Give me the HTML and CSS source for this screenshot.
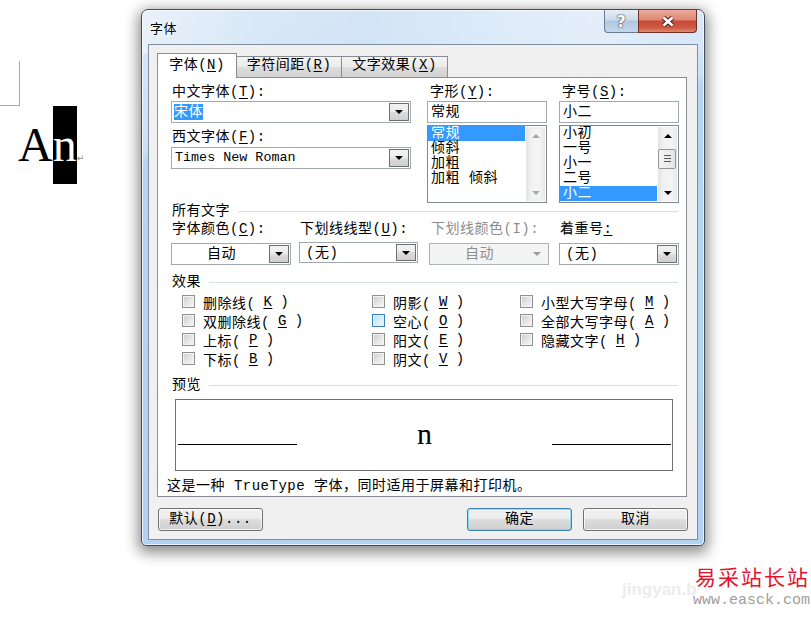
FILE: index.html
```html
<!DOCTYPE html>
<html lang="zh-CN">
<head>
    <meta charset="UTF-8">
    <meta name="viewport" content="width=device-width, initial-scale=1.0">
    <title>字体</title>
    <link rel="stylesheet" href="styles.css">
</head>
<body>
    <div class="screen">
        <div class="doc">
            <div class="margin-mark"></div>
            <div class="word">A<span class="sel">n</span><span class="para">↵</span></div>
        </div>

        <div class="dialog">
            <div class="titlebar">
                <span class="title">字体</span>
                <div class="caption">
                    <span class="cap help">?</span>
                    <span class="cap close">
                        <svg width="16" height="13" viewBox="0 0 16 13">
                            <path d="M3.5 2.5 L12.5 10.5 M12.5 2.5 L3.5 10.5" stroke="#5a2019" stroke-width="4.6" fill="none"/>
                            <path d="M3.5 2.5 L12.5 10.5 M12.5 2.5 L3.5 10.5" stroke="#fff" stroke-width="2.6" fill="none"/>
                        </svg>
                    </span>
                </div>
            </div>

            <div class="client">
                <div class="tabs">
                    <span class="tab active">字体(<u>N</u>)</span>
                    <span class="tab">字符间距(<u>R</u>)</span>
                    <span class="tab">文字效果(<u>X</u>)</span>
                </div>

                <div class="panel">
                    <div class="font-grid">
                        <div class="field-col">
                            <span class="lbl">中文字体(<u>T</u>):</span>
                            <div class="combo"><span class="val"><span class="hl">宋体</span></span><span class="drop"></span></div>
                            <span class="lbl second">西文字体(<u>F</u>):</span>
                            <div class="combo combo-2"><span class="val mono">Times New Roman</span><span class="drop"></span></div>
                        </div>
                        <div class="field-col narrow">
                            <span class="lbl">字形(<u>Y</u>):</span>
                            <div class="edit">常规</div>
                            <div class="list">
                                <ul>
                                    <li class="on">常规</li>
                                    <li>倾斜</li>
                                    <li>加粗</li>
                                    <li>加粗 倾斜</li>
                                </ul>
                                <div class="vscroll disabled">
                                    <span class="arr up"></span>
                                    <span class="arr down"></span>
                                </div>
                            </div>
                        </div>
                        <div class="field-col narrow">
                            <span class="lbl">字号(<u>S</u>):</span>
                            <div class="edit">小二</div>
                            <div class="list">
                                <ul>
                                    <li>小初</li>
                                    <li>一号</li>
                                    <li>小一</li>
                                    <li>二号</li>
                                    <li class="on">小二</li>
                                </ul>
                                <div class="vscroll">
                                    <span class="arr up"></span>
                                    <span class="thumb"></span>
                                    <span class="arr down"></span>
                                </div>
                            </div>
                        </div>
                    </div>

                    <div class="group first">所有文字</div>
                    <div class="row4">
                        <div>
                            <span class="lbl">字体颜色(<u>C</u>):</span>
                            <div class="combo"><span class="val center">自动</span><span class="drop"></span></div>
                        </div>
                        <div>
                            <span class="lbl">下划线线型(<u>U</u>):</span>
                            <div class="combo short"><span class="val pad">(无)</span><span class="drop"></span></div>
                        </div>
                        <div>
                            <span class="lbl off">下划线颜色(I):</span>
                            <div class="combo disabled"><span class="val center">自动</span><span class="drop"></span></div>
                        </div>
                        <div>
                            <span class="lbl">着重号<u>:</u></span>
                            <div class="combo"><span class="val pad">(无)</span><span class="drop"></span></div>
                        </div>
                    </div>

                    <div class="group">效果</div>
                    <div class="effects">
                        <div class="fx-col">
                            <span class="check"><span class="box"></span>删除线(<u>K</u>)</span>
                            <span class="check"><span class="box"></span>双删除线(<u>G</u>)</span>
                            <span class="check"><span class="box"></span>上标(<u>P</u>)</span>
                            <span class="check"><span class="box"></span>下标(<u>B</u>)</span>
                        </div>
                        <div class="fx-col">
                            <span class="check"><span class="box"></span>阴影(<u>W</u>)</span>
                            <span class="check"><span class="box hot"></span>空心(<u>O</u>)</span>
                            <span class="check"><span class="box"></span>阳文(<u>E</u>)</span>
                            <span class="check"><span class="box"></span>阴文(<u>V</u>)</span>
                        </div>
                        <div class="fx-col">
                            <span class="check"><span class="box"></span>小型大写字母(<u>M</u>)</span>
                            <span class="check"><span class="box"></span>全部大写字母(<u>A</u>)</span>
                            <span class="check"><span class="box"></span>隐藏文字(<u>H</u>)</span>
                        </div>
                    </div>

                    <div class="group">预览</div>
                    <div class="preview">
                        <span class="pv-line left"></span>
                        <span class="pv-char">n</span>
                        <span class="pv-line"></span>
                    </div>
                    <p class="note">这是一种 TrueType 字体，同时适用于屏幕和打印机。</p>
                </div>

                <div class="actions">
                    <span class="btn">默认(<u>D</u>)...</span>
                    <span class="btn default">确定</span>
                    <span class="btn">取消</span>
                </div>
            </div>
        </div>
    </div>

    <div class="ghost">jingyan.b</div>
    <div class="watermark">
        <div class="wm-name">易采站长站</div>
        <div class="wm-url">www.easck.com</div>
    </div>
</body>
</html>
```

FILE: styles.css
```css
* {
    box-sizing: border-box;
    margin: 0;
    padding: 0;
}

body {
    font-family: "Liberation Mono", "Noto Sans CJK SC", monospace;
    font-size: 14px;
    letter-spacing: 0.5px;
    color: #000;
    background-color: #fff;
    overflow: hidden;
}

u {
    text-decoration-thickness: 1px;
    text-underline-offset: 2px;
}

.screen {
    display: flex;
    align-items: flex-start;
    height: 618px;
}

/* document behind the dialog */
.doc {
    flex: none;
    width: 141px;
}

.margin-mark {
    width: 20px;
    height: 45px;
    margin-top: 61px;
    border-right: 1px solid #a8a8a8;
    border-bottom: 1px solid #a8a8a8;
}

.word {
    height: 78px;
    padding-left: 18px;
    font-family: "Liberation Serif", serif;
    font-size: 48px;
    line-height: 78px;
    letter-spacing: 0;
    white-space: nowrap;
}

.word .sel {
    display: inline-block;
    height: 78px;
    background-color: #000;
    color: #fff;
}

.word .para {
    font-family: "DejaVu Sans", sans-serif;
    font-size: 9px;
    line-height: 1;
    color: #8a8a8a;
}

/* window frame */
.dialog {
    flex: none;
    width: 564px;
    height: 537px;
    margin-top: 9px;
    padding: 0 6px 5px;
    border: 1px solid #3e4b5b;
    border-radius: 7px 7px 5px 5px;
    background:
        linear-gradient(100deg, rgba(255,255,255,0.45) 0%, rgba(255,255,255,0.1) 22%, rgba(255,255,255,0) 40%, rgba(255,255,255,0.25) 62%, rgba(255,255,255,0.4) 80%, rgba(255,255,255,0.15) 100%) top / 100% 44px no-repeat,
        linear-gradient(172deg, #d6e6f7 0, #cde1f6 140px, #b7d4f1 152px, #b3d1f0 100%);
    box-shadow: 0 4px 14px 3px rgba(0,0,0,0.45), inset 0 0 0 1px rgba(255,255,255,0.7);
}

.titlebar {
    display: flex;
    justify-content: space-between;
    align-items: flex-start;
    height: 34px;
}

.title {
    padding: 11px 0 0 2px;
    font-family: "Noto Sans CJK SC", sans-serif;
    font-size: 13px;
    line-height: 14px;
    letter-spacing: 0.5px;
    text-shadow: 0 0 6px #fff, 0 0 3px #fff;
}

.caption {
    display: flex;
    margin-right: 1px;
}

.cap {
    display: flex;
    align-items: center;
    justify-content: center;
    height: 23px;
    border: 1px solid #6c7b8d;
    border-top: none;
}

.help {
    width: 34px;
    border-right: none;
    border-radius: 0 0 0 4px;
    background: linear-gradient(#e6eef7 0%, #ccdbeb 45%, #b1c7de 50%, #c3d7ec 100%);
    font-family: "DejaVu Sans", sans-serif;
    font-size: 16px;
    font-weight: bold;
    color: #fff;
    text-shadow: 0 0 1px #4a5561, 0 0 1px #4a5561, 0 0 2px #4a5561;
}

.close {
    width: 59px;
    border-color: #6f2e27;
    border-radius: 0 0 4px 0;
    background: linear-gradient(#eaab9d 0%, #de8874 45%, #c54a35 50%, #cf5a43 80%, #e08a6e 100%);
}

/* client area */
.client {
    display: flex;
    flex-direction: column;
    height: 496px;
    padding: 8px 0 0 8px;
    background-color: #f0f0f0;
    border: 1px solid #7f8ea1;
}

.tabs {
    display: flex;
    align-items: flex-end;
    height: 24px;
}

.tab {
    height: 21px;
    padding-top: 1px;
    border: 1px solid #898c95;
    border-left: none;
    border-bottom: none;
    background: linear-gradient(#f3f3f3, #ebebeb 50%, #dddddd 50%, #d2d2d2);
    line-height: 15px;
    text-align: center;
    white-space: nowrap;
}

.tab:nth-child(1) { width: 80px; }
.tab:nth-child(2) { width: 105px; }
.tab:nth-child(3) { width: 106px; }

.tab.active {
    position: relative;
    z-index: 1;
    height: 25px;
    margin-bottom: -1px;
    padding-top: 4px;
    border-left: 1px solid #898c95;
    background: #fff;
}

.panel {
    width: 530px;
    height: 420px;
    padding: 7px 8px 0 9px;
    background-color: #fff;
    border: 1px solid #898c95;
}

.lbl {
    display: block;
    height: 15px;
    padding-left: 1px;
    line-height: 15px;
    white-space: nowrap;
}

.lbl.off {
    padding-left: 2px;
    color: #8d8d8d;
}

.font-grid {
    display: grid;
    grid-template-columns: 256px 132px 120px;
    margin-left: 4px;
}

.field-col {
    width: 240px;
}

.field-col.narrow {
    width: 120px;
}

.field-col .lbl {
    margin-bottom: 1px;
}

.field-col.narrow .lbl {
    padding-left: 3px;
}

.field-col .lbl.second {
    margin-top: 7px;
    margin-bottom: 2px;
}

/* combo boxes */
.combo {
    display: flex;
    align-items: center;
    height: 22px;
    padding: 1px;
    background-color: #fff;
    border: 1px solid #a3a9b1;
}

.combo .val {
    flex: 1;
    padding-left: 1px;
    line-height: 18px;
    white-space: nowrap;
    overflow: hidden;
}

.combo .val.mono {
    padding-left: 2px;
    letter-spacing: 0;
    font-size: 13.4px;
}

.combo .val.center {
    text-align: center;
}

.combo .val.pad {
    padding-left: 5px;
}

.hl {
    background-color: #3399ff;
    color: #fff;
}

.drop {
    display: flex;
    align-items: center;
    justify-content: center;
    flex: none;
    width: 20px;
    height: 18px;
    border: 1px solid #707070;
    background: linear-gradient(#f2f2f2, #ebebeb 50%, #dddddd 50%, #cfcfcf);
}

.drop::after {
    content: "";
    border-left: 4px solid transparent;
    border-right: 4px solid transparent;
    border-top: 4px solid #000;
}

.combo.disabled {
    background-color: #f4f4f4;
    border-color: #adb2b5;
    color: #8d8d8d;
}

.combo.disabled .drop {
    border-color: transparent;
    background: none;
}

.combo.disabled .drop::after {
    border-top-color: #9a9a9a;
}

/* edit + list boxes */
.edit {
    height: 22px;
    padding-left: 3px;
    border: 1px solid #a3a9b1;
    line-height: 20px;
}

.list {
    display: flex;
    height: 78px;
    margin-top: 2px;
    border: 1px solid #828790;
    overflow: hidden;
}

.list ul {
    flex: 1;
    list-style: none;
}

.list li {
    height: 15px;
    padding-left: 3px;
    line-height: 15px;
    white-space: pre;
}

.list li.on {
    background-color: #3399ff;
    color: #fff;
}

.vscroll {
    display: flex;
    flex-direction: column;
    flex: none;
    width: 19px;
    margin: 1px;
    background: linear-gradient(90deg, #e3e3e3, #f2f2f2 30%, #f4f4f4 70%, #e8e8e8);
}

.arr {
    display: flex;
    align-items: center;
    justify-content: center;
    height: 17px;
}

.arr.down {
    margin-top: auto;
}

.arr::after {
    content: "";
    border-left: 4px solid transparent;
    border-right: 4px solid transparent;
}

.arr.up::after {
    border-bottom: 4px solid #000;
}

.arr.down::after {
    border-top: 4px solid #000;
}

.vscroll.disabled .arr.up::after {
    border-bottom-color: #a8a8a8;
}

.vscroll.disabled .arr.down::after {
    border-top-color: #a8a8a8;
}

.thumb {
    height: 20px;
    margin: 5px 1px 0 0;
    border: 1px solid #959595;
    border-radius: 2px;
    background:
        linear-gradient(#5a5a5a, #5a5a5a) center 5px / 7px 1px no-repeat,
        linear-gradient(#5a5a5a, #5a5a5a) center 8px / 7px 1px no-repeat,
        linear-gradient(#5a5a5a, #5a5a5a) center 11px / 7px 1px no-repeat,
        linear-gradient(90deg, #f4f4f4, #e4e4e4);
}

/* group headings with rule */
.group {
    display: flex;
    align-items: center;
    gap: 8px;
    height: 15px;
    margin: 10px 0 0 5px;
    line-height: 15px;
    white-space: nowrap;
}

.group.first {
    margin-top: 1px;
}

.group::after {
    content: "";
    flex: 1;
    height: 1px;
    background-color: #d5dfe5;
}

.row4 {
    display: grid;
    grid-template-columns: 128px 130px 130px 120px;
    margin: 3px 0 0 4px;
}

.row4 .combo {
    width: 120px;
    margin-top: 6px;
}

.row4 .combo.short {
    width: 119px;
    height: 21px;
    margin-top: 5px;
}

.row4 .combo.short .drop {
    height: 17px;
}

/* effect checkboxes */
.effects {
    display: flex;
    margin: 2px 0 0 15px;
}

.fx-col {
    display: flex;
    flex-direction: column;
}

.fx-col:nth-child(1) { width: 190px; }
.fx-col:nth-child(2) { width: 148px; }

.check {
    display: flex;
    align-items: center;
    gap: 8px;
    height: 19px;
    white-space: nowrap;
}

.box {
    flex: none;
    width: 13px;
    height: 13px;
    border: 1px solid #8e8f8f;
    background: linear-gradient(135deg, #cdcdcd 0%, #e6e6e6 55%, #f8f8f8 100%);
    box-shadow: inset 0 0 0 1px #f4f4f4;
}

.box.hot {
    border-color: #3c7fb1;
    background: linear-gradient(135deg, #b5def7 0%, #d6effc 55%, #eef8fe 100%);
    box-shadow: inset 0 0 0 1px #def2fc;
}

/* preview */
.preview {
    display: flex;
    align-items: flex-end;
    width: 498px;
    height: 72px;
    margin: 6px 0 0 8px;
    padding: 0 1px 25px;
    border: 1px solid #707070;
}

.pv-line {
    flex: none;
    width: 119px;
    height: 1px;
    background-color: #000;
}

.pv-line.left {
    margin-left: 1px;
}

.pv-char {
    flex: 1;
    margin-bottom: -4px;
    font-family: "Liberation Serif", serif;
    font-size: 30px;
    line-height: 30px;
    letter-spacing: 0;
    text-align: center;
}

.note {
    margin-top: 8px;
    line-height: 15px;
    white-space: nowrap;
}

/* buttons */
.actions {
    display: flex;
    margin-top: 11px;
    padding: 0 9px 0 1px;
}

.btn {
    width: 105px;
    height: 23px;
    border: 1px solid #707070;
    border-radius: 3px;
    background: linear-gradient(#f2f2f2, #ebebeb 50%, #dddddd 50%, #cfcfcf);
    box-shadow: inset 0 0 0 1px rgba(255,255,255,0.7);
    line-height: 21px;
    text-align: center;
    white-space: nowrap;
}

.btn.default {
    margin-left: auto;
    border-color: #3c7fb1;
    box-shadow: inset 0 0 0 1px rgba(72,216,251,0.55);
}

.btn + .btn.default + .btn {
    margin-left: 11px;
}

/* watermark overlay */
.ghost {
    position: absolute;
    left: 622px;
    top: 580px;
    font-family: "Liberation Sans", sans-serif;
    font-size: 17px;
    font-weight: bold;
    letter-spacing: 0;
    color: #ececec;
}

.watermark {
    position: absolute;
    left: 693px;
    top: 563px;
}

.wm-name {
    padding-left: 2px;
    font-family: "Noto Sans CJK SC", sans-serif;
    font-size: 21px;
    line-height: 26px;
    letter-spacing: 2px;
    color: #e6122c;
}

.wm-url {
    margin-top: 3px;
    font-family: "Liberation Mono", monospace;
    font-size: 15px;
    line-height: 17px;
    letter-spacing: 0;
    color: #a59c9c;
}
```
